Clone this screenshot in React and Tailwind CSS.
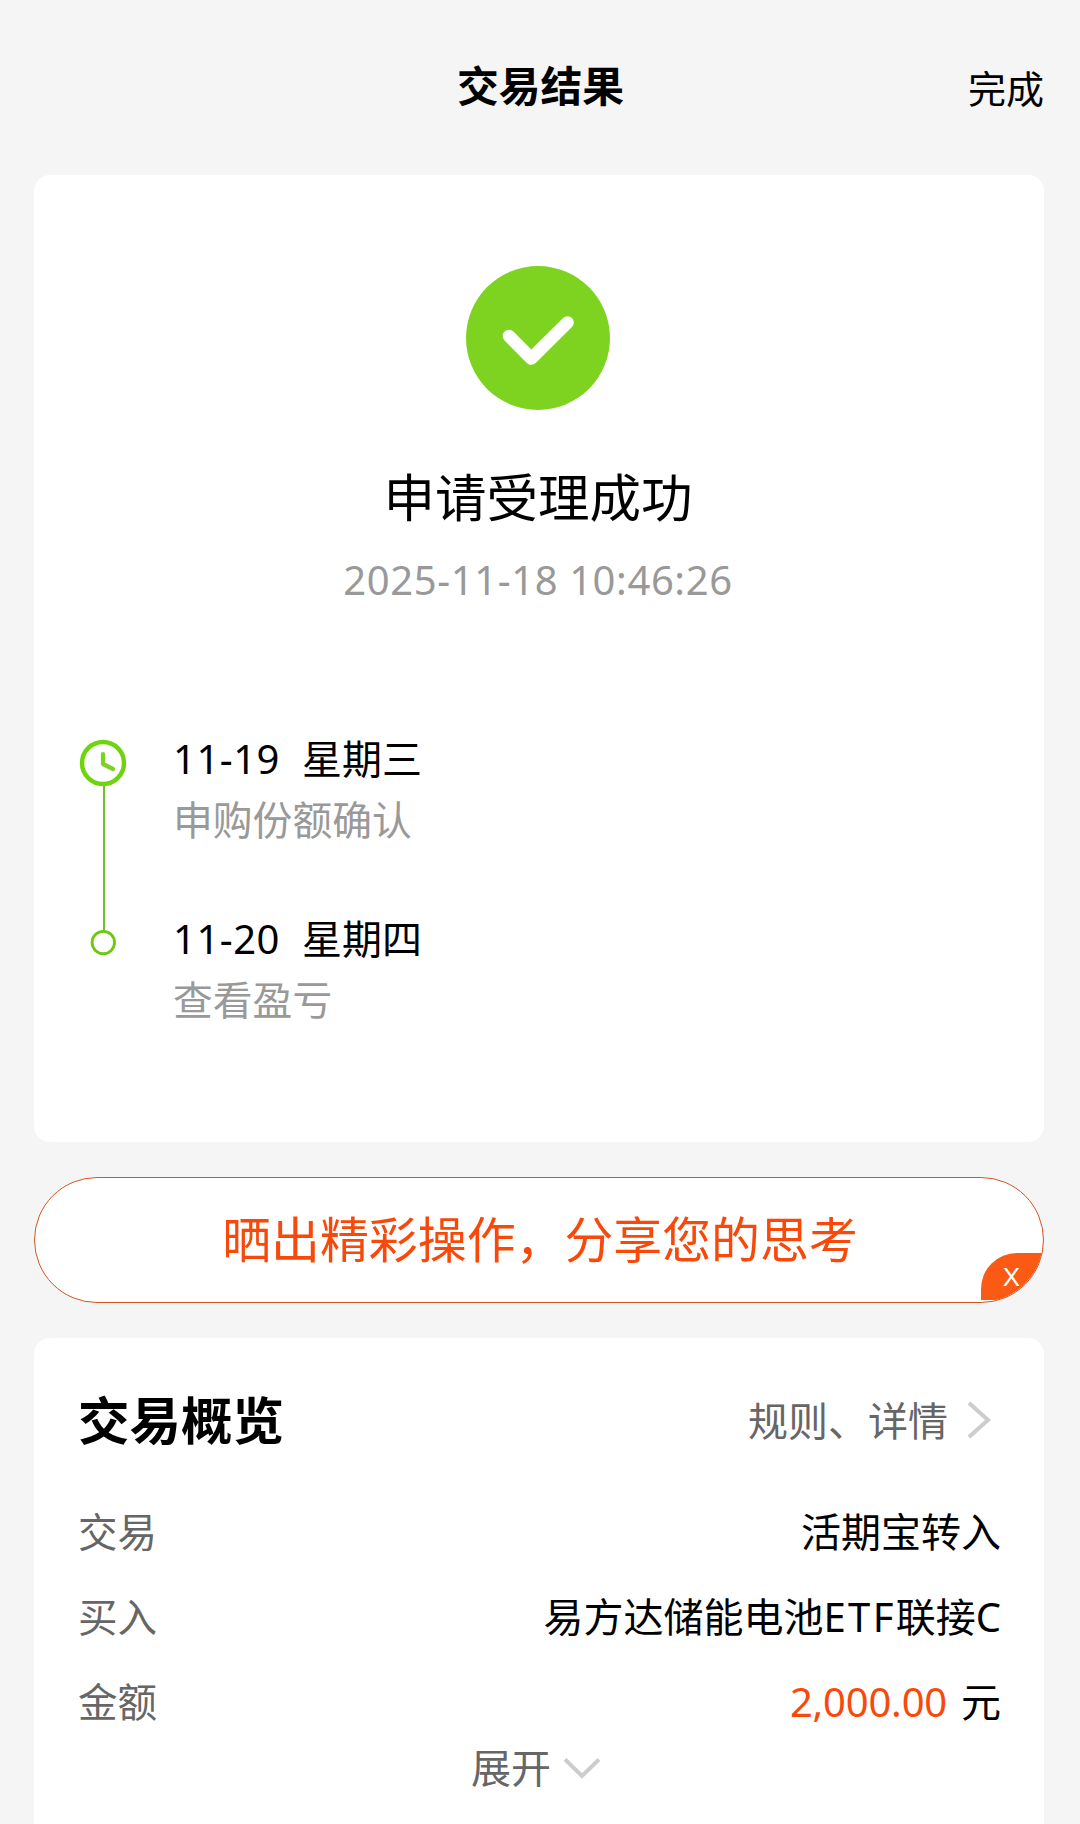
const steps = [
  { date: '11-19', day: '星期三', desc: '申购份额确认' },
  { date: '11-20', day: '星期四', desc: '查看盈亏' },
]

function Row({ label, children }) {
  return (
    <div className="flex h-[85px] items-center justify-between">
      <span className="text-[39.5px] text-[#666]">{label}</span>
      <span>{children}</span>
    </div>
  )
}

export default function App() {
  return (
    <div className="flex h-[1824px] w-[1080px] flex-col overflow-hidden bg-[#f5f5f5] font-['Noto_Sans','Noto_Sans_CJK_SC',sans-serif] text-[40px] leading-[40px] text-black">
      {/* Header */}
      <header className="grid h-[175px] shrink-0 grid-cols-3 items-start px-[35px] pt-[65px]">
        <h1 className="col-start-2 pt-px pl-px text-center text-[41.8px] leading-[40px] font-bold">交易结果</h1>
        <button className="pt-[3px] pr-px text-right text-[38px] leading-[40px]">完成</button>
      </header>

      {/* Result */}
      <section className="mr-[36px] ml-[34px] flex h-[967px] shrink-0 flex-col rounded-2xl bg-white px-[44px] pt-[91px]">
        <svg className="ml-[388px] size-[144px]" viewBox="0 0 144 144" fill="none">
          <circle cx="72" cy="72" r="72" fill="#7ed321" />
          <path d="M43 70L65.3 92.5L101.5 56.5" stroke="#fff" strokeWidth="12.6" strokeLinecap="round" strokeLinejoin="round" />
        </svg>
        <h2 className="mt-[57px] pr-[2px] text-center text-[51.5px] leading-[60px]">申请受理成功</h2>
        <p className="mt-[33px] pr-[2px] text-center tracking-[0.6px] text-[#999]">2025-11-18 10:46:26</p>

        {/* Timeline */}
        <div className="mt-[139px] flex">
          <svg className="-mt-px ml-px h-[220px] w-[48px] shrink-0" viewBox="0 0 48 220" fill="none">
            <path d="M25 47V192" stroke="#72c12c" strokeWidth="2" />
            <circle cx="24" cy="25" r="21" stroke="#6fd40d" strokeWidth="4.4" />
            <path d="M24 16V26L34 31" stroke="#7ed321" strokeWidth="4.2" strokeLinecap="round" strokeLinejoin="round" />
            <circle cx="24.3" cy="204.5" r="11.2" fill="#fff" stroke="#6cc810" strokeWidth="2.8" />
          </svg>
          <div className="ml-[46px] flex flex-col gap-[80px]">
            {steps.map(s => (
              <div key={s.date} className="flex flex-col gap-[20px]">
                <div className="flex">
                  <span className="w-[129px] tracking-[0.5px]">{s.date}</span>
                  <span>{s.day}</span>
                </div>
                <span className="pt-px text-[39.8px] leading-[39px] text-[#999]">{s.desc}</span>
              </div>
            ))}
          </div>
        </div>
      </section>

      {/* Share */}
      <section className="relative mt-[35px] mr-[36px] ml-[34px] flex h-[126px] shrink-0 items-center justify-center overflow-hidden rounded-full border border-[#d8541f] bg-white pb-[3px] pl-[2px] text-[48.9px] text-[#f8490b]">
        晒出精彩操作，分享您的思考
        <button className="absolute right-0 bottom-[2px] flex h-[47px] w-[62px] items-center justify-center rounded-tl-[36px] bg-[#fb5a14] pr-px font-['Liberation_Sans',sans-serif] text-[26px] leading-none text-white">
          X
        </button>
      </section>

      {/* Overview */}
      <section className="mt-[35px] mr-[36px] ml-[34px] h-[520px] shrink-0 rounded-t-2xl bg-white px-[44px] pt-[52px]">
        <div className="flex h-[60px] items-center justify-between">
          <h2 className="text-[51.5px] leading-[60px] font-bold">交易概览</h2>
          <div className="flex items-center gap-[19px] pt-[2px] pr-[9px] text-[#666]">
            <span>规则、详情</span>
            <svg className="h-[40px] w-[24px]" viewBox="0 0 24 40" fill="none">
              <path d="M2 2L21 19L2 36" stroke="#ccc" strokeWidth="4" />
            </svg>
          </div>
        </div>
        <div className="-mr-px mt-[39px]">
          <Row label="交易">活期宝转入</Row>
          <Row label="买入">
            易方达储能电池<span className="tracking-[2.3px]">ETF</span>联接C
          </Row>
          <Row label="金额">
            <span className="mr-[14px] tracking-[-0.2px] text-[#f8490b]">2,000.00</span>元
          </Row>
        </div>
        <button className="mt-[4px] ml-[393px] flex items-center gap-[13px] text-[#666]">
          <span>展开</span>
          <svg className="h-[24px] w-[36px]" viewBox="0 0 36 24" fill="none">
            <path d="M1 3.5L18 20L35 3.5" stroke="#ccc" strokeWidth="4" />
          </svg>
        </button>
      </section>
    </div>
  )
}
